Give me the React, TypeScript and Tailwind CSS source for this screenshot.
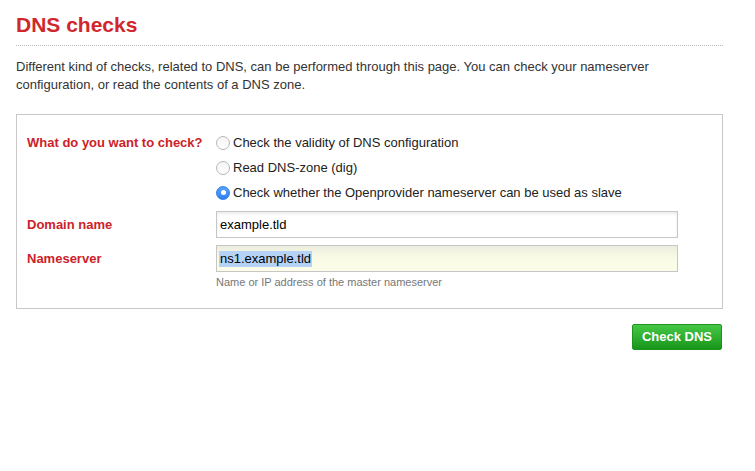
import { useState } from "react";

const options = [
  "Check the validity of DNS configuration",
  "Read DNS-zone (dig)",
  "Check whether the Openprovider nameserver can be used as slave",
];

function Radio({ checked }: { checked: boolean }) {
  if (checked) {
    return (
      <span className="flex h-[14px] w-[14px] shrink-0 items-center justify-center rounded-full border border-[#2f7fe6] bg-gradient-to-b from-[#5aa2f8] to-[#2f80ef]">
        <span className="h-[5px] w-[5px] rounded-full bg-white" />
      </span>
    );
  }
  return (
    <span className="h-[14px] w-[14px] shrink-0 rounded-full border border-[#b8b8b8] bg-gradient-to-b from-[#f4f4f4] to-white" />
  );
}

function App() {
  const [choice, setChoice] = useState(2);

  return (
    <div className="min-h-screen bg-white font-['Liberation_Sans',Arial,sans-serif] text-[13px] text-[#333]">
      <div className="ml-4 w-[707px]">
        <h1 className="border-b border-dotted border-[#bbb] pt-[13px] pb-[8px] text-[21px] font-bold leading-[24px] text-[#d0272d]">
          DNS checks
        </h1>
        <p className="mt-[12px] leading-[18px]">
          Different kind of checks, related to DNS, can be performed through this page. You can check your nameserver
          configuration, or read the contents of a DNS zone.
        </p>

        <div className="mt-5 border border-[#c8c8c8] pt-[15px] pb-[19px] pl-[10px]">
          <div className="grid grid-cols-[189px_462px] gap-y-0">
            <div className="font-bold leading-[25px] text-[#cc2229]">What do you want to check?</div>
            <div className="flex flex-col">
              {options.map((opt, i) => (
                <label
                  key={i}
                  className="flex h-[25px] cursor-pointer items-center gap-[3px]"
                  onClick={() => setChoice(i)}
                >
                  <Radio checked={choice === i} />
                  <span className="text-[#222]">{opt}</span>
                </label>
              ))}
            </div>

            <div className="mt-[6px] flex h-[27px] items-center font-bold text-[#cc2229]">Domain name</div>
            <input
              defaultValue="example.tld"
              className="mt-[6px] h-[27px] w-[462px] border border-[#c6c6c6] bg-white px-[3px] text-[13px] text-black shadow-[inset_0_2px_3px_rgba(0,0,0,0.08)] outline-none"
            />

            <div className="mt-[7px] flex h-[27px] items-center font-bold text-[#cc2229]">Nameserver</div>
            <div className="mt-[7px]">
              <div className="flex h-[27px] w-[462px] items-center border border-[#c6c6c6] bg-gradient-to-b from-[#ededdf] via-[#fafbe6] to-[#fcfde9] px-[2px] text-black">
                <span className="bg-[#b4d3f7] px-[1px] leading-[16px]">ns1.example.tld</span>
              </div>
              <div className="mt-[3px] text-[11px] leading-[14px] text-[#777]">
                Name or IP address of the master nameserver
              </div>
            </div>
          </div>
        </div>

        <div className="mt-[15px] flex justify-end pr-px">
          <button className="h-[26px] w-[90px] rounded-[2px] border border-[#1f931f] bg-gradient-to-b from-[#45c845] to-[#16961a] text-[13px] font-bold text-white">
            Check DNS
          </button>
        </div>
      </div>
    </div>
  );
}

export default App;
